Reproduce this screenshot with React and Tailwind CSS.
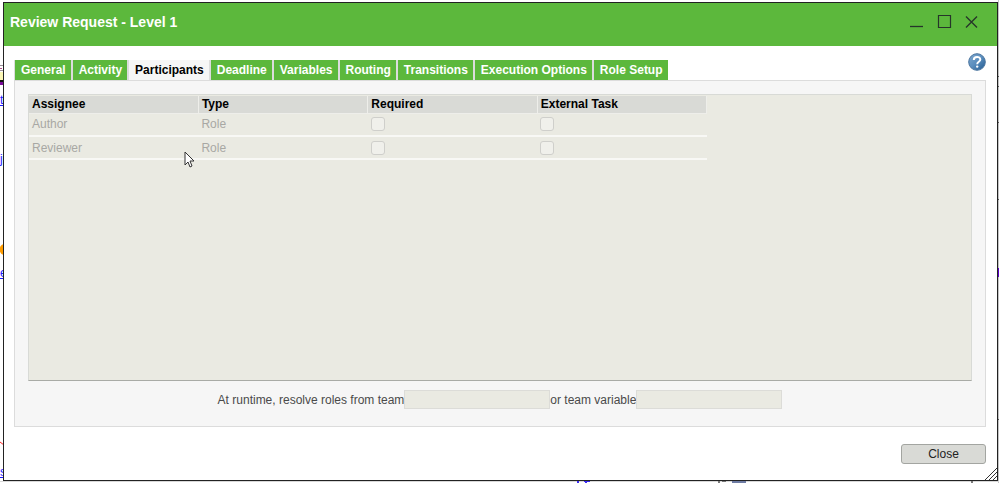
import { useState } from "react";

const tabs = [
  "General",
  "Activity",
  "Participants",
  "Deadline",
  "Variables",
  "Routing",
  "Transitions",
  "Execution Options",
  "Role Setup",
];

const participants = [
  { assignee: "Author", type: "Role" },
  { assignee: "Reviewer", type: "Role" },
];

// Parts of the workflow map that stick out around the dialog
const MapEdges = () => (
  <div className="absolute inset-0 overflow-hidden text-xs text-[#1a1aff]" aria-hidden="true">
    <svg className="absolute left-0 top-0 h-[483px] w-1" viewBox="0 0 4 483">
      <path d="M0 65.500h4M0 70.500h4" stroke="#9a8f98" />
      <path d="M0 68.500h2" stroke="#b0508a" />
      <path d="M0 72h4v8H0z" fill="#fbf6b5" />
      <path d="M0 80h4v2H0z" fill="#111" />
      <path d="M0 82h4v3H0z" fill="#7a0a9a" />
      <circle cx="5" cy="249.500" r="5.500" fill="#ff9c00" />
      <path d="M0 442l4 3" stroke="#f22" />
    </svg>
    <span className="absolute left-0 top-[92px] underline">t</span>
    <span className="absolute left-0 top-[151px] underline">j</span>
    <span className="absolute left-0 top-[265px] underline">e</span>
    <span className="absolute left-0 top-[464px] underline">s</span>
    <svg className="absolute right-0 top-0 h-[483px] w-px" viewBox="0 0 1 483">
      <path d="M0 0h1v483H0z" fill="#c4c4c4" />
      <path d="M0 76.500h1M0 86.500h1M0 122.500h1M0 199.500h1M0 419.500h1" stroke="#555" />
      <path d="M0 268h1v9H0z" fill="#5a00c8" />
    </svg>
    <svg className="absolute bottom-0 left-0 h-0.5 w-[999px]" viewBox="0 0 999 2">
      <path d="M0 0h999v1H0z" fill="#d8d8d8" />
      <path d="M577 0h2v2h-2zM584 0h6v1h-6zM585 1h2v1h-2z" fill="#3a2af0" />
      <path d="M718 0h2v2h-2zM722 0h4v1h-4zM971 0h2v2h-2z" fill="#777" />
      <path d="M732 0h14v2h-14z" fill="#6d7ba3" />
    </svg>
  </div>
);

const WindowButtons = () => (
  <div className="flex gap-3 text-[#26352a]">
    <button aria-label="Minimize" className="size-4">
      <svg viewBox="0 0 16 16" stroke="currentColor" strokeWidth="1.300" fill="none">
        <path d="M2 12.500h13" />
      </svg>
    </button>
    <button aria-label="Maximize" className="size-4">
      <svg viewBox="0 0 16 16" stroke="currentColor" strokeWidth="1.200" fill="none">
        <path d="M2.500 1.500h12v12h-12z" />
      </svg>
    </button>
    <button aria-label="Close window" className="size-4">
      <svg viewBox="0 0 16 16" stroke="currentColor" strokeWidth="1.400" fill="none">
        <path d="M2 2.500l11 11M13 2.500L2 13.500" />
      </svg>
    </button>
  </div>
);

const HelpIcon = () => (
  <svg viewBox="0 0 18 18" className="size-[18px]">
    <defs>
      <linearGradient id="help" x1="0" y1="0" x2="1" y2="1">
        <stop offset="0" stopColor="#7fa9cf" />
        <stop offset="0.5" stopColor="#5a8dbd" />
        <stop offset="1" stopColor="#20598f" />
      </linearGradient>
    </defs>
    <circle cx="9" cy="9" r="8.300" fill="url(#help)" stroke="#4a749e" />
    <path d="M5.800 7C5.800 3 12.300 3 12.300 6.500C12.300 8.800 9.200 8.700 9.200 11.200" stroke="#fff" strokeWidth="2" fill="none" />
    <circle cx="9.200" cy="13.600" r="1.200" fill="#fff" />
  </svg>
);

export default function App() {
  const [active, setActive] = useState("Participants");

  return (
    <div className="relative flex h-screen bg-white pt-0.5 pr-px pb-0.5 pl-[3px] font-['Liberation_Sans',Arial,sans-serif] text-xs">
      <MapEdges />

      <div className="relative flex flex-1 flex-col border border-[#222] bg-white">
        {/* Title bar */}
        <header className="flex h-[43px] items-center justify-between bg-[#5cb83c] pr-[17px] pb-1.5 pl-1.5">
          <h1 className="text-sm font-bold text-white">Review Request - Level 1</h1>
          <WindowButtons />
        </header>

        <main className="flex flex-1 flex-col pt-3.5 pr-[11px] pl-2.5">
          {/* Tabs */}
          <div className="flex items-start justify-between">
            <div role="tablist" className="flex gap-0.5 border-l border-[#dcdcdc] bg-[#dcdcdc]">
              {tabs.map((tab) => (
                <button
                  key={tab}
                  role="tab"
                  aria-selected={tab === active}
                  onClick={() => setActive(tab)}
                  className={
                    tab === active
                      ? "h-5 bg-[#f6f6f6] pr-[5px] pl-1.5 font-bold text-black"
                      : "h-5 bg-[#5cb83c] pr-[5px] pl-1.5 font-bold text-white"
                  }
                >
                  {tab}
                </button>
              ))}
            </div>
            <button aria-label="Help" className="-mt-[7px] h-[18px]">
              <HelpIcon />
            </button>
          </div>

          {/* Tab panel */}
          <section className="flex flex-1 flex-col border border-[#dcdcdc] bg-[#f6f6f6] px-[13px] pt-[13px] pb-[17px]">
            <div className="flex-1 border border-[#d8dad6] border-b-[#a9aba6] bg-[#eaeae2] pt-px">
              <table className="w-[72%] table-fixed border-collapse text-left">
                <thead>
                  <tr className="h-[17px] bg-[#d9dad6] text-black">
                    {["Assignee", "Type", "Required", "External Task"].map((h) => (
                      <th key={h} className="border-r border-b border-[#eeeeea] px-[3px] py-0 leading-4 font-bold">
                        {h}
                      </th>
                    ))}
                  </tr>
                </thead>
                <tbody>
                  {participants.map((p) => (
                    <tr key={p.assignee} className="h-[23px] border-b-2 border-[#f8f8f5] text-[#a8a8a4]">
                      <td className="px-[3px] py-0">{p.assignee}</td>
                      <td className="px-[3px] py-0">{p.type}</td>
                      {["required", "external task"].map((name) => (
                        <td key={name} className="px-[3px] py-0">
                          <input
                            type="checkbox"
                            disabled
                            aria-label={p.assignee + " " + name}
                            className="block size-3.5 appearance-none rounded-[3px] border border-[#cfcfcb] bg-[#f0f0eb]"
                          />
                        </td>
                      ))}
                    </tr>
                  ))}
                </tbody>
              </table>
            </div>

            <div className="mt-[9px] flex items-center justify-center text-[#4a4a4a]">
              <label htmlFor="team">At runtime, resolve roles from team</label>
              <input id="team" disabled className="h-[19px] w-[146px] border border-[#dcdcd8] bg-[#eaeae2]" />
              <label htmlFor="teamVariable">or team variable</label>
              <input id="teamVariable" disabled className="h-[19px] w-[146px] border border-[#dcdcd8] bg-[#eaeae2]" />
            </div>
          </section>

          <footer className="flex justify-end pt-[17px] pb-4">
            <button className="h-5 w-[85px] rounded-[3px] border border-[#a3a5a1] bg-[#d9dad6] text-[#222]">
              Close
            </button>
          </footer>
        </main>

        {/* Resize grip */}
        <svg viewBox="0 0 12 12" className="absolute right-0 bottom-0 size-3" stroke="#333" fill="none">
          <path d="M0 12L12 0M4 12L12 4M8 12L12 8" />
        </svg>
      </div>

      {/* Mouse pointer */}
      <svg viewBox="0 0 12 18" className="absolute top-[151px] left-[184px] h-[18px] w-3">
        <path d="M1 1v13l3-3 2 5 2-1-2-5h4z" fill="#fff" stroke="#333" />
      </svg>
    </div>
  );
}
